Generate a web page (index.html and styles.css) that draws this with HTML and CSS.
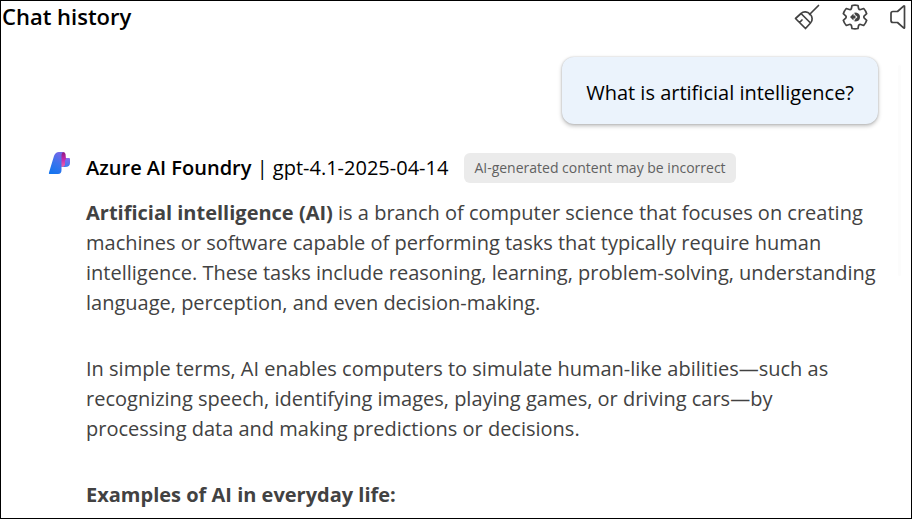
FILE: index.html
```html
<!DOCTYPE html>
<html lang="en">
<head>
<meta charset="utf-8">
<title>Chat history</title>
<link rel="stylesheet" href="styles.css">
</head>
<body>
<header class="toolbar">
  <h1 class="title">Chat history</h1>
  <div class="actions">
    <button class="action" type="button" aria-label="Clear chat">
      <svg width="26" height="26" viewBox="0 0 26 26"><path d="M24.500 1.500 15.500 10.500M7 9.500C9.500 7 13.500 7.500 16 10C18.500 12.500 19 16.500 16.500 19L11.500 24.500 1.500 14.500ZM7 9.500 16.500 19M5.500 18.500 8 16"/></svg>
    </button>
    <button class="action" type="button" aria-label="Settings">
      <svg width="26" height="26" viewBox="0 0 26 26"><path d="M10 1.500Q13 .8 16 1.500L16.600 4.600Q17.200 5.900 18.700 5.500L21.700 4.500Q23.800 6.800 24.700 9.700L22.300 11.800Q21.400 13 22.300 14.200L24.700 16.300Q23.800 19.200 21.700 21.500L18.700 20.500Q17.200 20.100 16.600 21.400L16 24.500Q13 25.200 10 24.500L9.400 21.400Q8.800 20.100 7.300 20.500L4.300 21.500Q2.200 19.200 1.300 16.300L3.700 14.200Q4.600 13 3.700 11.800L1.300 9.700Q2.200 6.800 4.300 4.500L7.300 5.500Q8.800 5.900 9.400 4.600Z"/><path class="core" d="M12.500 8.500Q18 8.500 18 13Q18 17.500 12.500 17.500L12.500 16 15.500 13 12.500 10ZM8 13 11.500 9.500V16.500ZM11 11.500H13.500V14.500H11Z"/></svg>
    </button>
    <button class="action" type="button" aria-label="Read aloud">
      <svg width="16" height="26" viewBox="0 0 16 26"><path d="M14.500 2.200V23.800Q14 24.300 13.300 23.700L7.500 18.500H3Q1 18.500 1 16.500V9.500Q1 7.500 3 7.500H7.500L13.300 2.300Q14 1.700 14.500 2.200Z"/></svg>
    </button>
  </div>
</header>
<main class="chat">
  <p class="question">What is artificial intelligence?</p>
  <article class="answer">
    <svg class="logo" width="22" height="24" viewBox="0 0 22 24" aria-hidden="true">
      <defs>
        <linearGradient id="blue" x1="0.700" y1="0" x2="0.300" y2="1"><stop offset="0" stop-color="#7567e8"/><stop offset=".5" stop-color="#3b73ed"/><stop offset="1" stop-color="#1475ef"/></linearGradient>
        <linearGradient id="pink" x1="0" y1="0" x2="0" y2="1"><stop offset="0" stop-color="#8f1780"/><stop offset=".5" stop-color="#c42bac"/><stop offset="1" stop-color="#ef67ae"/></linearGradient>
        <linearGradient id="wing" x1="0" y1="0" x2="0" y2="1"><stop offset="0" stop-color="#8d67ee"/><stop offset="1" stop-color="#367df0"/></linearGradient>
      </defs>
      <path fill="url(#wing)" d="M16 7H21Q22 7 22 8V12Q22 16 17 16H13.500Z"/>
      <path fill="url(#pink)" d="M12 1H15Q17 1 17.500 3L18 8Q17 8.500 17 10V14Q16.500 16 13.500 16H12Z"/>
      <path fill="url(#blue)" d="M15.500 1Q13.500 1.500 13.500 5V19Q13.500 23 10 23H1.500Q.5 23 1 21.500L6 5Q7.500 1 11 1Z"/>
    </svg>
    <div class="body">
      <div class="byline">
        <span class="author"><b>Azure AI Foundry</b> | gpt-4.1-2025-04-14</span>
        <span class="notice">AI-generated content may be incorrect</span>
      </div>
      <p class="text"><strong>Artificial intelligence (AI)</strong> is a branch of computer science that focuses on creating machines or software capable of performing tasks that typically require human intelligence. These tasks include reasoning, learning, problem-solving, understanding language, perception, and even decision-making.</p>
      <p class="text">In simple terms, AI enables computers to simulate human-like abilities—such as recognizing speech, identifying images, playing games, or driving cars—by processing data and making predictions or decisions.</p>
      <p class="text"><strong>Examples of AI in everyday life:</strong></p>
    </div>
  </article>
  <div class="scroll-track"></div>
</main>
</body>
</html>
```
FILE: styles.css
```css
* { box-sizing: border-box; }
body {
  margin: 0;
  min-height: 100vh;
  border: 1px solid #000;
  background: #fff;
  color: #000;
  font-family: "Open Sans", "Noto Sans", sans-serif;
  font-size: 20px;
  line-height: 30px;
}
h1, p { margin: 0; }
.toolbar {
  display: flex;
  justify-content: space-between;
  height: 32px;
}
.title {
  padding-left: 1px;
  font-size: 22px;
  font-weight: 600;
  line-height: 30px;
}
.actions {
  display: flex;
  align-items: center;
  gap: 22px;
  padding-right: 5px;
}
.action {
  display: flex;
  padding: 0;
  border: 0;
  background: none;
}
.action svg {
  fill: none;
  stroke: #424242;
  stroke-width: 1.700;
  stroke-linejoin: round;
  stroke-linecap: round;
}
.action .core { fill: #424242; stroke: none; }
.chat {
  position: relative;
  display: flex;
  flex-direction: column;
  padding: 24px 33px 0 47px;
}
.question {
  align-self: flex-end;
  padding: 21px 24px 16px;
  border-radius: 12px;
  background: #ebf3fc;
  box-shadow: 0 0 2px rgba(0, 0, 0, .2), 0 2px 4px rgba(0, 0, 0, .26);
}
.answer {
  display: flex;
  gap: 16px;
  margin-top: 29px;
}
.logo { flex: none; margin-top: -2px; }
.body { flex: 1; }
.byline {
  display: flex;
  align-items: center;
  gap: 16px;
  height: 30px;
}
.author b { font-weight: 600; }
.notice {
  padding: 0 10px;
  border-radius: 6px;
  background: #ebebeb;
  color: #616161;
  font-size: 14px;
}
.text { color: #424242; }
.byline + .text { margin-top: 15px; }
.text + .text { margin-top: 36px; }
.text strong { font-weight: 700; }
.scroll-track {
  position: absolute;
  top: 32px;
  right: 10px;
  width: 3px;
  height: 211px;
  border-radius: 2px;
  background: #fcfcfc;
}
```
